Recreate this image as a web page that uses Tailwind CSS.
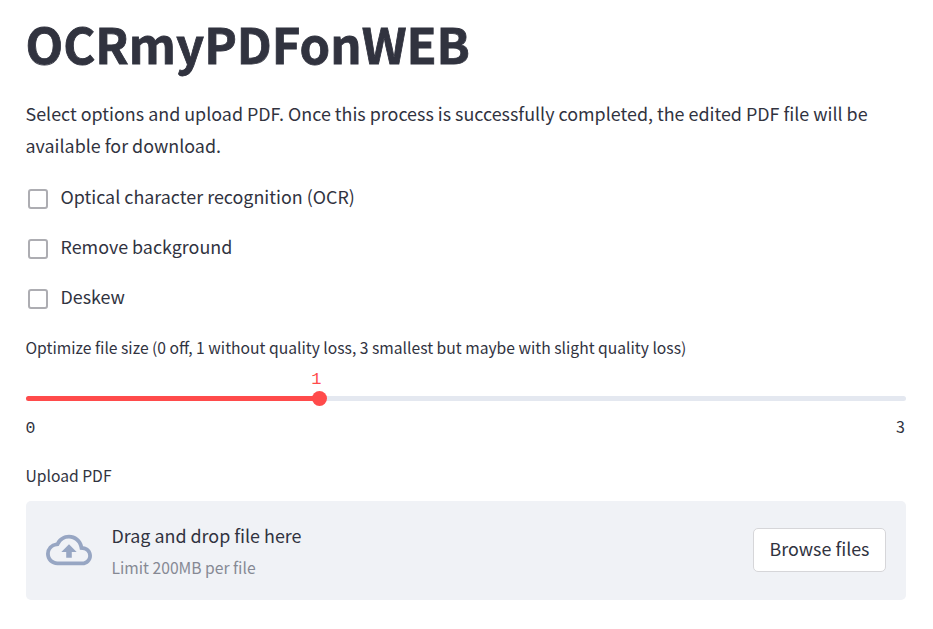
<!DOCTYPE html>
<html lang="en">
<head>
<meta charset="utf-8">
<title>OCRmyPDFonWEB</title>
<script src="https://cdn.jsdelivr.net/npm/@tailwindcss/browser@4"></script>
</head>
<body class="bg-white text-[#31333f] font-['Noto_Sans_CJK_SC','Noto_Sans',sans-serif] text-[17.9px]">
<main class="flex flex-col w-[880px] ml-[26px] pt-[10px]">
  <h1 class="-ml-[0.5px] text-[49px] font-bold leading-[66px] tracking-[0px] [-webkit-text-stroke:0.8px_#31333f] whitespace-nowrap">OCRmyPDFonWEB</h1>
  <p class="mt-[21px] -ml-[0.5px] leading-8"><span class="whitespace-nowrap">Select options and upload PDF. Once this process is successfully completed, the edited PDF file will be</span><br>available for download.</p>
  <div class="mt-[19px] flex flex-col gap-[18px]">
    <label class="flex items-start h-8 pl-0.5"><span class="mt-[9px] size-5 border-2 border-[#adadb2] rounded-[3px] bg-white"></span><span class="ml-[12.5px] leading-8">Optical character recognition (OCR)</span></label>
    <label class="flex items-start h-8 pl-0.5"><span class="mt-[9px] size-5 border-2 border-[#adadb2] rounded-[3px] bg-white"></span><span class="ml-[12.5px] leading-8">Remove background</span></label>
    <label class="flex items-start h-8 pl-0.5"><span class="mt-[9px] size-5 border-2 border-[#adadb2] rounded-[3px] bg-white"></span><span class="ml-[12.5px] leading-8">Deskew</span></label>
  </div>
  <div class="mt-[23px] -ml-[0.5px] text-[15.67px] leading-[26px] whitespace-nowrap">Optimize file size (0 off, 1 without quality loss, 3 smallest but maybe with slight quality loss)</div>
  <div class="mt-[35px] relative h-[5px] rounded-full bg-[#e4e8f0]">
    <div class="h-full w-1/3 rounded-full bg-[#ff4b4b]"></div>
    <div class="absolute -top-[5px] left-1/3 -ml-[7.8px] size-[15px] rounded-full bg-[#ff4b4b]"></div>
    <div class="absolute -top-[29px] left-1/3 -ml-[8px] leading-[26px] text-[17px] text-[#ff4b4b] font-['Liberation_Mono',monospace]">1</div>
  </div>
  <div class="mt-[15px] -ml-[0.5px] -mr-px flex items-start justify-between leading-[26px] pr-[2px] text-[16.5px] font-['Liberation_Mono',monospace]"><span>0</span><span class="-mt-[3px] text-[16px] font-['Noto_Sans_CJK_SC',sans-serif]">3</span></div>
  <div class="mt-[21px] -ml-[0.5px] text-[15.66px] leading-[26px]">Upload PDF</div>
  <section class="mt-3 flex items-center h-[99px] px-5 rounded-[5px] bg-[#f0f2f6]">
    <svg class="-mt-[2px] size-[46px] shrink-0" viewBox="0 0 24 24" fill="#97a6c3"><path d="M19.35 10.04A7.49 7.49 0 0 0 12 4C9.11 4 6.6 5.64 5.35 8.04A5.994 5.994 0 0 0 0 14c0 3.31 2.69 6 6 6h13c2.76 0 5-2.24 5-5 0-2.64-2.05-4.78-4.65-4.96zM19 18H6c-2.21 0-4-1.79-4-4 0-2.05 1.53-3.76 3.56-3.97l1.07-.11.5-.95A5.469 5.469 0 0 1 12 6c2.62 0 4.88 1.86 5.39 4.43l.3 1.5 1.53.11A2.98 2.98 0 0 1 22 15c0 1.65-1.35 3-3 3zM8 13h2.55v3h2.9v-3H16l-4-4z"/></svg>
    <div class="ml-[19.5px] flex flex-col"><span class="leading-8">Drag and drop file here</span><span class="h-8 leading-[34px] text-[15.66px] text-[#868994]">Limit 200MB per file</span></div>
    <button class="ml-auto -mt-[2px] w-[133px] h-11 pb-[2px] rounded-[5px] border border-[#d6d6d9] bg-white whitespace-nowrap">Browse files</button>
  </section>
</main>
</body>
</html>
